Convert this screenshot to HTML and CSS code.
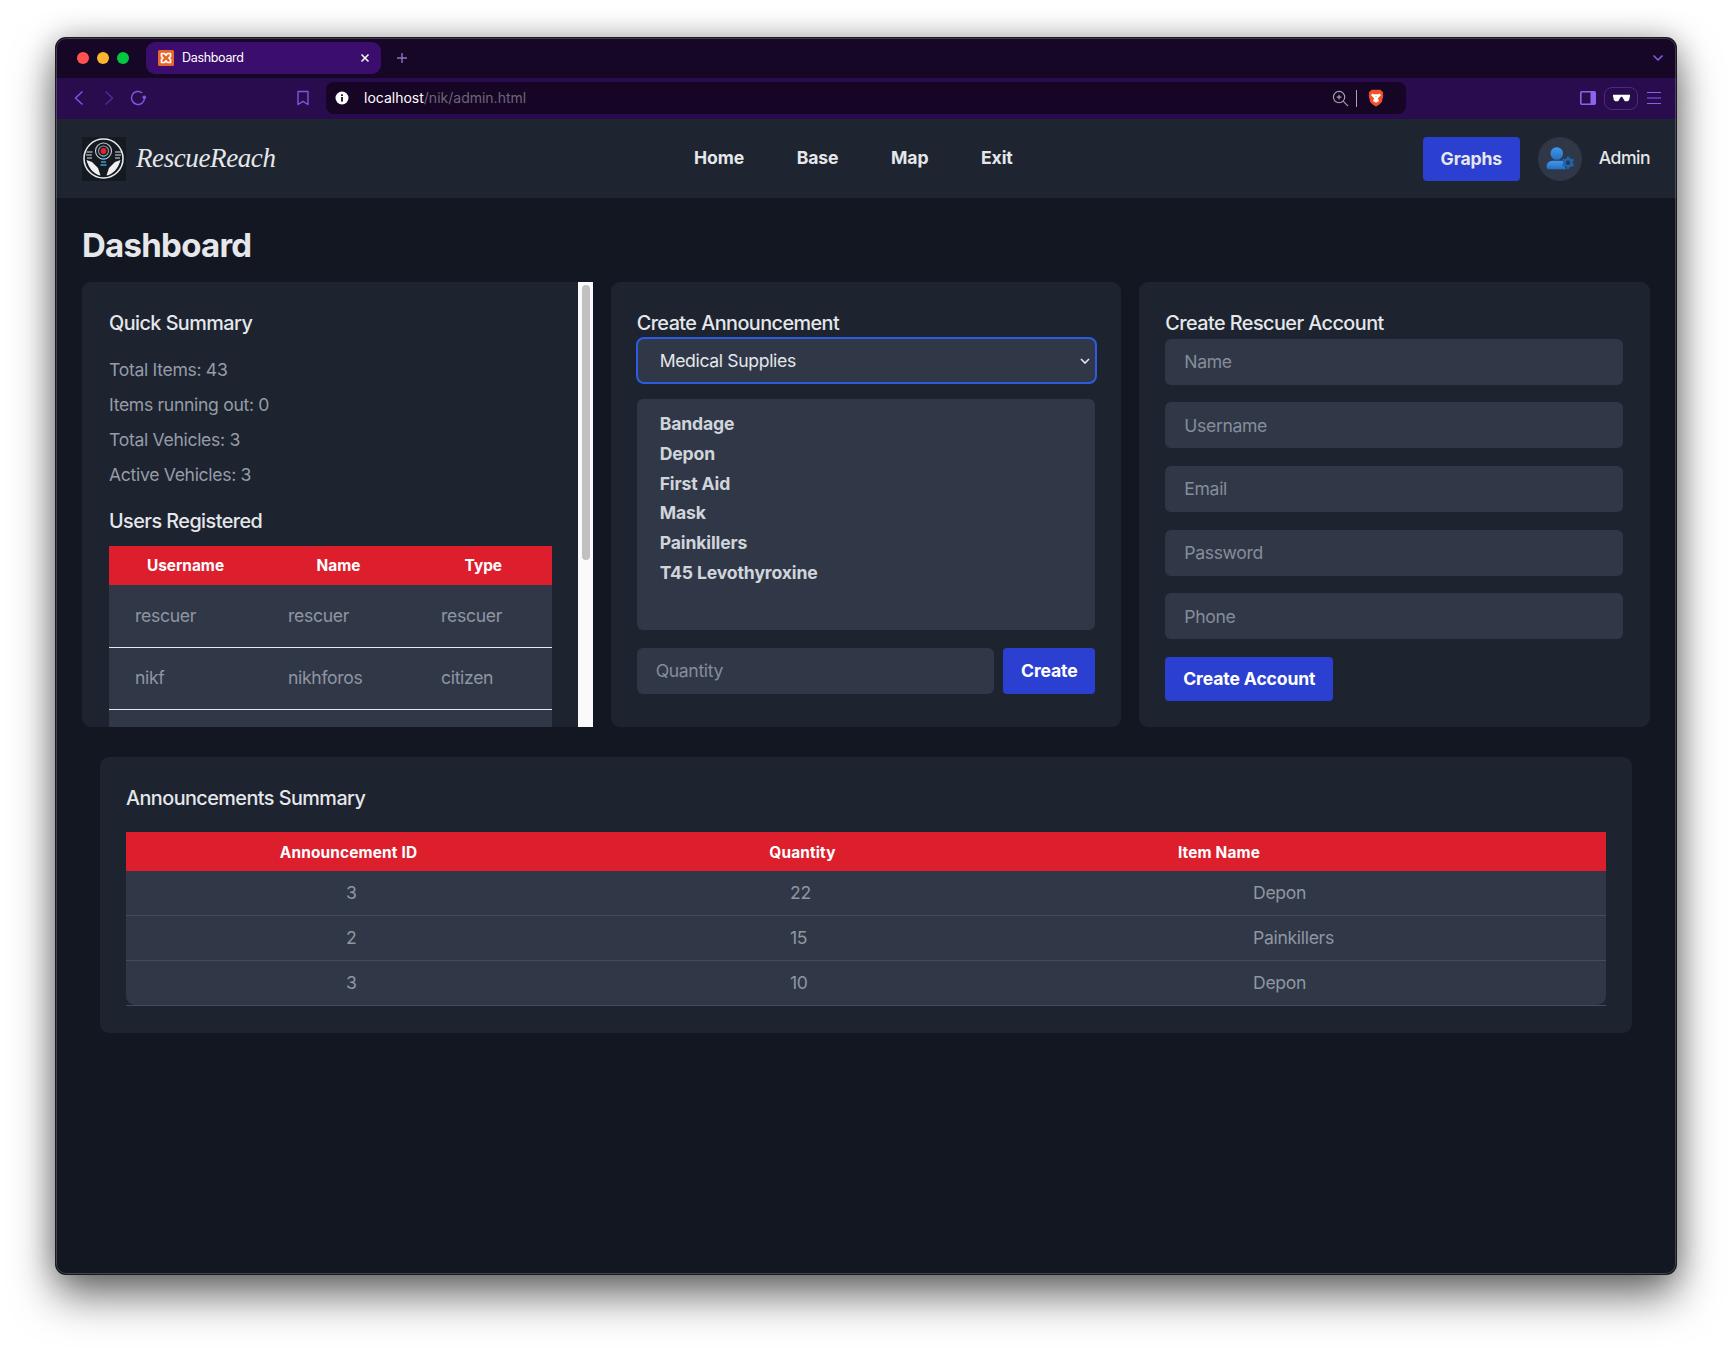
FILE: index.html
```html
<!DOCTYPE html>
<html lang="en">
<head>
  <meta charset="UTF-8" />
  <title>Dashboard</title>
  <link rel="stylesheet" href="styles.css">
</head>
<body>
  <div class="window">
    <!-- browser chrome -->
    <div class="titlebar">
      <span class="dot dot-red"></span>
      <span class="dot dot-yellow"></span>
      <span class="dot dot-green"></span>
      <div class="tab">
        <svg class="favicon" viewBox="0 0 16 16">
          <rect width="16" height="16" rx="1.5" fill="#e8662b"/>
          <path d="M3.500 3.500h3l1.500 1.800 1.500-1.800h3v3L10.900 8l1.600 1.500v3h-3L8 10.700l-1.500 1.800h-3v-3L5.100 8 3.500 6.500z" fill="none" stroke="#fff" stroke-width="1.700" stroke-linejoin="round"/>
        </svg>
        <span class="tab-title">Dashboard</span>
        <svg class="tab-close" viewBox="0 0 10 10"><path d="M1.500 1.500l7 7M8.500 1.500l-7 7" stroke="#fff" stroke-width="1.500"/></svg>
      </div>
      <svg class="tab-plus" viewBox="0 0 12 12"><path d="M6 1v10M1 6h10" stroke="#8d74b8" stroke-width="1.400"/></svg>
      <svg class="tab-menu" viewBox="0 0 12 8"><path d="M1.500 1.500L6 6l4.500-4.500" fill="none" stroke="#8a5cf0" stroke-width="1.500"/></svg>
    </div>

    <div class="toolbar">
      <svg class="tb-back" viewBox="0 0 10 16"><path d="M8.500 1.500L1.500 8l7 6.500" fill="none" stroke="#7b57e0" stroke-width="1.500"/></svg>
      <svg class="tb-forward" viewBox="0 0 10 16"><path d="M1.500 1.500l7 6.500-7 6.500" fill="none" stroke="#4b2e93" stroke-width="1.500"/></svg>
      <svg class="tb-reload" viewBox="0 0 18 18"><path d="M13.200 4A6.500 6.500 0 1 0 15.500 9" fill="none" stroke="#7b57e0" stroke-width="1.500"/><circle cx="15.300" cy="8.300" r="1.800" fill="#7b57e0"/></svg>
      <svg class="tb-bookmark" viewBox="0 0 16 16"><path d="M3 1.500h10v13l-5-3.200-5 3.200z" fill="none" stroke="#7b57e0" stroke-width="1.400" stroke-linejoin="round"/></svg>
      <div class="urlbar">
        <svg class="url-info" viewBox="0 0 14 14"><circle cx="7" cy="7" r="6.500" fill="#fff"/><rect x="6.100" y="6" width="1.800" height="4.600" fill="#170526"/><rect x="6.100" y="3.300" width="1.800" height="1.700" fill="#170526"/></svg>
        <span class="url-text"><span class="url-host">localhost</span>/nik/admin.html</span>
        <svg class="url-zoom" viewBox="0 0 18 18"><circle cx="7.500" cy="7.500" r="6" fill="none" stroke="#a9a4b0" stroke-width="1.200"/><path d="M12 12l5 5" stroke="#a9a4b0" stroke-width="1.200"/><path d="M7.500 5v5M5 7.500h5" stroke="#a9a4b0" stroke-width="1.200"/></svg>
        <span class="url-divider"></span>
        <svg class="url-brave" viewBox="0 0 16 18">
          <path d="M3.500 0.800h9l1 1.200 1.800 1.200-.5 1.800.5 1.500-1.500 6.500-2.800 2.700L8 17.500l-3-1.800-2.800-2.700L.7 6.500l.5-1.500-.5-1.800L2.500 2z" fill="#f0522b"/>
          <path d="M4 4.500l2 .8h4l2-.8.800 2-1.600 1.500-1.400 1.200L11 12l-3 1.800L5 12l1.200-2.800L4.800 8 3.200 6.500zM8 7l-1 .8h2z" fill="#fff"/>
        </svg>
      </div>
      <svg class="tb-sidebar" viewBox="0 0 16 14"><rect x=".8" y=".8" width="14.400" height="12.400" rx="1" fill="none" stroke="#8f62ee" stroke-width="1.600"/><rect x="10.500" y="1" width="5" height="12" fill="#8f62ee"/></svg>
      <div class="tb-pill">
        <svg viewBox="0 0 18 8"><path d="M0 .5h18v1.500l-1 4.500-1.500 1h-3L10.500 4 9.500 2.800h-1L7.500 4 5.500 7.500h-3L1 6.500 0 2z" fill="#fff"/></svg>
      </div>
      <svg class="tb-menu" viewBox="0 0 16 14"><path d="M1 1.500h14M1 7h14M1 12.500h14" stroke="#8a5cf0" stroke-width="1.200"/></svg>
    </div>

    <!-- site nav -->
    <nav class="navbar">
      <div class="brand">
        <svg class="brand-logo" viewBox="0 0 44 44">
          <rect width="44" height="44" fill="#141a22"/>
          <circle cx="21.500" cy="21.500" r="19.500" fill="none" stroke="#e8e8e8" stroke-width="1.600"/>
          <path d="M4.500 15h6M4 18h6M5 21h5M33 15h6M33 18h6M33 21h5" stroke="#9a9ea4" stroke-width="1.400"/>
          <circle cx="21.500" cy="14" r="8" fill="none" stroke="#c4c7cb" stroke-width="1.200"/>
          <circle cx="21.500" cy="14" r="5" fill="none" stroke="#8b8f96" stroke-width="1.200"/>
          <circle cx="21.500" cy="14" r="2.900" fill="#e8202f"/>
          <path d="M20 19h3M19.500 22h4M19 25h5M18.500 28h6" stroke="#3f9fcb" stroke-width="1.500"/>
          <path d="M4.500 23l5.500 2 6 6 2.500 7.500C12 37.500 6.500 31 4.500 23z" fill="#f0f0f0"/>
          <path d="M38.500 23L33 25l-6 6-2.500 7.500C31 37.500 36.500 31 38.500 23z" fill="#f0f0f0"/>
        </svg>
        <span class="brand-name">RescueReach</span>
      </div>
      <div class="nav-links">
        <a href="#">Home</a>
        <a href="#">Base</a>
        <a href="#">Map</a>
        <a href="#">Exit</a>
      </div>
      <div class="nav-right">
        <button class="btn btn-graphs">Graphs</button>
        <span class="avatar">
          <svg viewBox="0 0 30 26">
            <defs>
              <linearGradient id="userFill" x1="0" y1="0" x2="0" y2="1">
                <stop offset="0" stop-color="#4199ec"/>
                <stop offset="1" stop-color="#246fc4"/>
              </linearGradient>
            </defs>
            <circle cx="11.500" cy="7" r="6.800" fill="url(#userFill)"/>
            <path d="M7 15h9c1.500 0 2.800.3 3.700 1-.5 2.500 0 5 1.800 8H3c-1.500 0-2.500-1-2.500-2.300C.5 18 3 15 7 15z" fill="url(#userFill)"/>
            <circle cx="23.700" cy="17" r="3.900" fill="none" stroke="#1f63b4" stroke-width="3"/>
            <path d="M23.700 10.200v2.200M23.700 21.600v2.200M17.800 13.600l1.900 1.100M27.700 19.300l1.900 1.100M17.800 20.400l1.900-1.100M27.700 14.700l1.900-1.100" stroke="#1f63b4" stroke-width="2.400"/>
          </svg>
        </span>
        <span class="nav-user">Admin</span>
      </div>
    </nav>

    <main class="main">
      <h1 class="page-title">Dashboard</h1>

      <div class="cards">
        <section class="card card-summary">
          <div class="summary-body">
            <h2 class="card-title">Quick Summary</h2>
            <p class="stat first">Total Items: 43</p>
            <p class="stat">Items running out: 0</p>
            <p class="stat">Total Vehicles: 3</p>
            <p class="stat">Active Vehicles: 3</p>
            <h2 class="card-title users-title">Users Registered</h2>
            <table class="users-table">
              <thead>
                <tr><th class="col-user">Username</th><th class="col-name">Name</th><th>Type</th></tr>
              </thead>
              <tbody>
                <tr><td>rescuer</td><td>rescuer</td><td>rescuer</td></tr>
                <tr><td>nikf</td><td>nikhforos</td><td>citizen</td></tr>
                <tr><td>&nbsp;</td><td>&nbsp;</td><td>&nbsp;</td></tr>
              </tbody>
            </table>
          </div>
          <div class="scroll-track"><div class="scroll-thumb"></div></div>
        </section>

        <section class="card">
          <h2 class="card-title">Create Announcement</h2>
          <div class="select-wrap">
            <select class="select">
              <option>Medical Supplies</option>
            </select>
            <svg class="select-arrow" viewBox="0 0 10 6"><path d="M1 1l4 4 4-4" fill="none" stroke="#e5e7eb" stroke-width="1.600"/></svg>
          </div>
          <ul class="item-list">
            <li>Bandage</li>
            <li>Depon</li>
            <li>First Aid</li>
            <li>Mask</li>
            <li>Painkillers</li>
            <li>T45 Levothyroxine</li>
          </ul>
          <div class="qty-row">
            <input class="field qty-field" type="number" placeholder="Quantity">
            <button class="btn btn-create">Create</button>
          </div>
        </section>

        <section class="card card-account">
          <h2 class="card-title">Create Rescuer Account</h2>
          <input class="field stacked" type="text" placeholder="Name">
          <input class="field stacked" type="text" placeholder="Username">
          <input class="field stacked" type="email" placeholder="Email">
          <input class="field stacked" type="password" placeholder="Password">
          <input class="field stacked" type="tel" placeholder="Phone">
          <button class="btn btn-account">Create Account</button>
        </section>
      </div>

      <section class="card card-wide">
        <h2 class="card-title wide-title">Announcements Summary</h2>
        <table class="ann-table">
          <thead>
            <tr>
              <th class="col-id">Announcement ID</th>
              <th class="col-qty">Quantity</th>
              <th class="col-item">Item Name</th>
              <th></th>
            </tr>
          </thead>
          <tbody>
            <tr><td>3</td><td>22</td><td>Depon</td><td></td></tr>
            <tr><td>2</td><td>15</td><td>Painkillers</td><td></td></tr>
            <tr><td>3</td><td>10</td><td>Depon</td><td></td></tr>
          </tbody>
        </table>
      </section>
    </main>
  </div>
</body>
</html>
```

FILE: styles.css
```css
* {
  box-sizing: border-box;
}
body {
  margin: 0;
  height: 1348px;
  padding: 38px 56px 0;
  background-color: #fff;
  font-family: Inter, "Liberation Sans", sans-serif;
  letter-spacing: -0.02em;
  overflow: hidden;
}
.window {
  position: relative;
  height: 1236px;
  border-radius: 10px;
  overflow: hidden;
  background-color: #131721;
  box-shadow: 0 0 0 1px #1a1a1c, 0 22px 44px rgba(0,0,0,0.55), 0 0 30px rgba(0,0,0,0.28);
}
.window::after {
  content: "";
  position: absolute;
  inset: 0;
  border: 1px solid rgba(255,255,255,0.2);
  border-radius: 10px;
  pointer-events: none;
}

/* browser chrome */
.titlebar {
  display: flex;
  align-items: flex-start;
  height: 40px;
  padding: 4px 0 0 21px;
  background-color: #170726;
}
.dot {
  width: 12px;
  height: 12px;
  border-radius: 50%;
  margin: 10px 8px 0 0;
}
.dot-red { background-color: #ff5250; }
.dot-yellow { background-color: #fdb52f; }
.dot-green { background-color: #03c73f; }
.tab {
  display: flex;
  align-items: center;
  width: 235px;
  height: 32px;
  margin-left: 9px;
  padding: 0 11px 0 12px;
  border-radius: 9px;
  background-color: #3b0d6c;
  color: #fff;
  font-size: 12.500px;
}
.favicon {
  width: 16px;
  height: 16px;
  margin-right: 8px;
}
.tab-title {
  flex: 1;
  margin-bottom: 1px;
}
.tab-close {
  width: 10px;
  height: 10px;
}
.tab-plus {
  width: 12px;
  height: 12px;
  margin: 10px 0 0 15px;
}
.tab-menu {
  width: 12px;
  height: 8px;
  margin: 12px 12px 0 auto;
}
.toolbar {
  display: flex;
  align-items: center;
  height: 41px;
  padding: 0 0 1px 18px;
  background-color: #280c4e;
}
.tb-back, .tb-forward {
  width: 10px;
  height: 16px;
}
.tb-forward { margin-left: 20px; }
.tb-reload {
  width: 18px;
  height: 18px;
  margin-left: 15px;
}
.tb-bookmark {
  width: 16px;
  height: 16px;
  margin-left: 148px;
}
.urlbar {
  display: flex;
  align-items: center;
  width: 1080px;
  height: 32px;
  margin-left: 15px;
  padding: 0 22px 0 9px;
  border-radius: 8px;
  background-color: #170526;
  color: #6d6579;
  font-size: 14px;
  letter-spacing: 0;
}
.url-info {
  width: 14px;
  height: 14px;
}
.url-text {
  flex: 1;
  margin: 0 0 2px 15px;
}
.url-host {
  color: #fff;
}
.url-zoom {
  width: 17px;
  height: 17px;
}
.url-divider {
  width: 1px;
  height: 17px;
  margin: 0 11px 0 7px;
  background-color: #a9a4b0;
}
.url-brave {
  width: 16px;
  height: 18px;
}
.tb-sidebar {
  width: 16px;
  height: 14px;
  margin-left: 174px;
}
.tb-pill {
  display: flex;
  align-items: center;
  justify-content: center;
  width: 34px;
  height: 23px;
  margin-left: 8px;
  border: 1px solid #4a2a80;
  border-radius: 8px;
}
.tb-pill svg {
  width: 17px;
  height: 8px;
}
.tb-menu {
  width: 16px;
  height: 14px;
  margin-left: 8px;
}

/* site nav */
.navbar {
  display: flex;
  align-items: center;
  justify-content: space-between;
  height: 79px;
  padding: 0 26px;
  background-color: #1e2530;
}
.brand {
  display: flex;
  align-items: center;
  width: 193px;
}
.brand-logo {
  flex-shrink: 0;
  width: 44px;
  height: 44px;
}
.brand-name {
  margin-left: 10px;
  color: #e5e7eb;
  font-family: "Liberation Serif", serif;
  font-size: 27px;
  font-style: italic;
  letter-spacing: -0.4px;
  white-space: nowrap;
}
.nav-links {
  display: flex;
  gap: 52.500px;
  margin: 0 0 2px 9px;
}
.nav-links a {
  color: #e5e7eb;
  font-size: 17.600px;
  font-weight: 700;
  letter-spacing: -0.005em;
  text-decoration: none;
}
.nav-right {
  display: flex;
  align-items: center;
}
.avatar {
  display: flex;
  align-items: center;
  justify-content: center;
  width: 44px;
  height: 44px;
  margin-left: 18px;
  border-radius: 50%;
  background-color: #303848;
}
.avatar svg {
  width: 28px;
  height: 24px;
}
.nav-user {
  margin: 0 0 2px 17px;
  color: #e5e7eb;
  font-size: 17.600px;
  font-weight: 500;
  letter-spacing: -0.03em;
}
.btn {
  height: 44px;
  border: none;
  border-radius: 4px;
  background-color: #2b3fd1;
  color: #fff;
  font-family: inherit;
  font-size: 17.600px;
  font-weight: 700;
  letter-spacing: -0.008em;
}
.btn-graphs {
  width: 97px;
  padding-bottom: 2px;
  color: #e5e7eb;
}

/* page */
.main {
  padding: 25px 26px 0;
}
.page-title {
  margin: 0 0 15px;
  color: #e5e7eb;
  font-size: 33px;
  font-weight: 700;
  letter-spacing: -0.022em;
  line-height: 44px;
}
.cards {
  display: grid;
  grid-template-columns: repeat(3, 1fr);
  gap: 18px;
  height: 445px;
}
.card {
  padding: 26px;
  border-radius: 9px;
  background-color: #1d232f;
}
.card-account {
  padding-right: 27px;
}
.card-title {
  margin: 0;
  color: #e5e7eb;
  font-size: 19.800px;
  font-weight: 500;
  letter-spacing: -0.027em;
  line-height: 30.800px;
}

/* quick summary */
.card-summary {
  display: flex;
  padding: 0;
  overflow: hidden;
  border-radius: 9px 0 0 9px;
}
.summary-body {
  flex: 1;
  padding: 26px 26px 0 27px;
  overflow: hidden;
}
.stat {
  margin: 8.800px 0 0;
  color: #959ca8;
  font-size: 17.600px;
  line-height: 26.400px;
}
.stat.first {
  margin-top: 18px;
}
.users-title {
  margin-top: 17px;
}
.users-table {
  width: 100%;
  margin-top: 9px;
  border-collapse: collapse;
  table-layout: fixed;
}
.users-table th {
  height: 39px;
  padding: 0;
  background-color: #dd1f2d;
  color: #fff;
  font-size: 15.400px;
  font-weight: 700;
  letter-spacing: 0;
}
.col-user, .col-name {
  width: 153px;
}
.users-table td {
  height: 62px;
  padding: 0 0 0 26px;
  border-bottom: 1px solid #e5e7eb;
  background-color: #303848;
  color: #8f96a2;
  font-size: 17.600px;
}
.users-table tbody tr:first-child td {
  height: 63px;
}
.users-table tbody tr:nth-child(2) td {
  padding-bottom: 2px;
}
.scroll-track {
  width: 15px;
  padding: 3px 3px 0 4px;
  background-color: #fafafa;
}
.scroll-thumb {
  height: 275px;
  border-radius: 4px;
  background-color: #c1c1c1;
}

/* announcement form */
.select-wrap {
  position: relative;
  margin: -1px -1px 0 0;
}
.select {
  display: block;
  width: 100%;
  height: 45px;
  padding: 0 23px;
  border: none;
  border-radius: 7px;
  outline: 2px solid #2d5be3;
  outline-offset: -1px;
  appearance: none;
  background-color: #303848;
  color: #e5e7eb;
  font-family: inherit;
  font-size: 17.600px;
  letter-spacing: -0.02em;
}
.select-arrow {
  position: absolute;
  top: 20px;
  right: 6px;
  width: 10px;
  height: 6px;
}
.item-list {
  height: 231px;
  margin: 16px 0 18px;
  padding: 10.300px 23px 0;
  border-radius: 6px;
  background-color: #303848;
  list-style: none;
}
.item-list li {
  color: #d1d5db;
  font-size: 17.600px;
  font-weight: 700;
  letter-spacing: -0.008em;
  line-height: 29.800px;
}
.field {
  display: block;
  height: 46px;
  padding: 0 19px;
  border: none;
  border-radius: 6px;
  background-color: #303848;
  color: #e5e7eb;
  font-family: inherit;
  font-size: 17.600px;
  letter-spacing: -0.02em;
}
.field::placeholder {
  color: #868d99;
  opacity: 1;
}
.qty-row {
  display: flex;
  gap: 9px;
}
.qty-field {
  flex: 1;
  min-width: 0;
}
.btn-create {
  width: 92px;
  height: 46px;
}

/* rescuer form */
.stacked {
  width: 100%;
  margin-bottom: 17.600px;
}
.btn-account {
  width: 168px;
}

/* announcements table */
.card-wide {
  height: 276px;
  margin: 30px 18px 0;
  padding-bottom: 0;
}
.wide-title {
  margin-bottom: 18px;
}
.ann-table {
  width: 100%;
  border-bottom: 1px solid #444c5b;
  border-collapse: separate;
  border-spacing: 0;
  table-layout: fixed;
}
.col-id { width: 445px; }
.col-qty { width: 463px; }
.col-item { width: 370px; }
.ann-table th {
  height: 39px;
  padding: 2px 0 0;
  background-color: #dd1f2d;
  color: #fff;
  font-size: 15.400px;
  font-weight: 700;
  letter-spacing: 0.01em;
}
.ann-table td {
  height: 45px;
  padding: 0 0 0 219px;
  border-bottom: 1px solid #444c5b;
  background-color: #303848;
  color: #8f96a2;
  font-size: 17.600px;
}
.ann-table td:first-child {
  padding-left: 220px;
}
.ann-table td:last-child {
  padding: 0;
}
.ann-table tr:last-child td {
  height: 44px;
  border-bottom: none;
}
.ann-table tr:last-child td:first-child {
  border-bottom-left-radius: 9px;
}
.ann-table tr:last-child td:last-child {
  border-bottom-right-radius: 9px;
}
```
